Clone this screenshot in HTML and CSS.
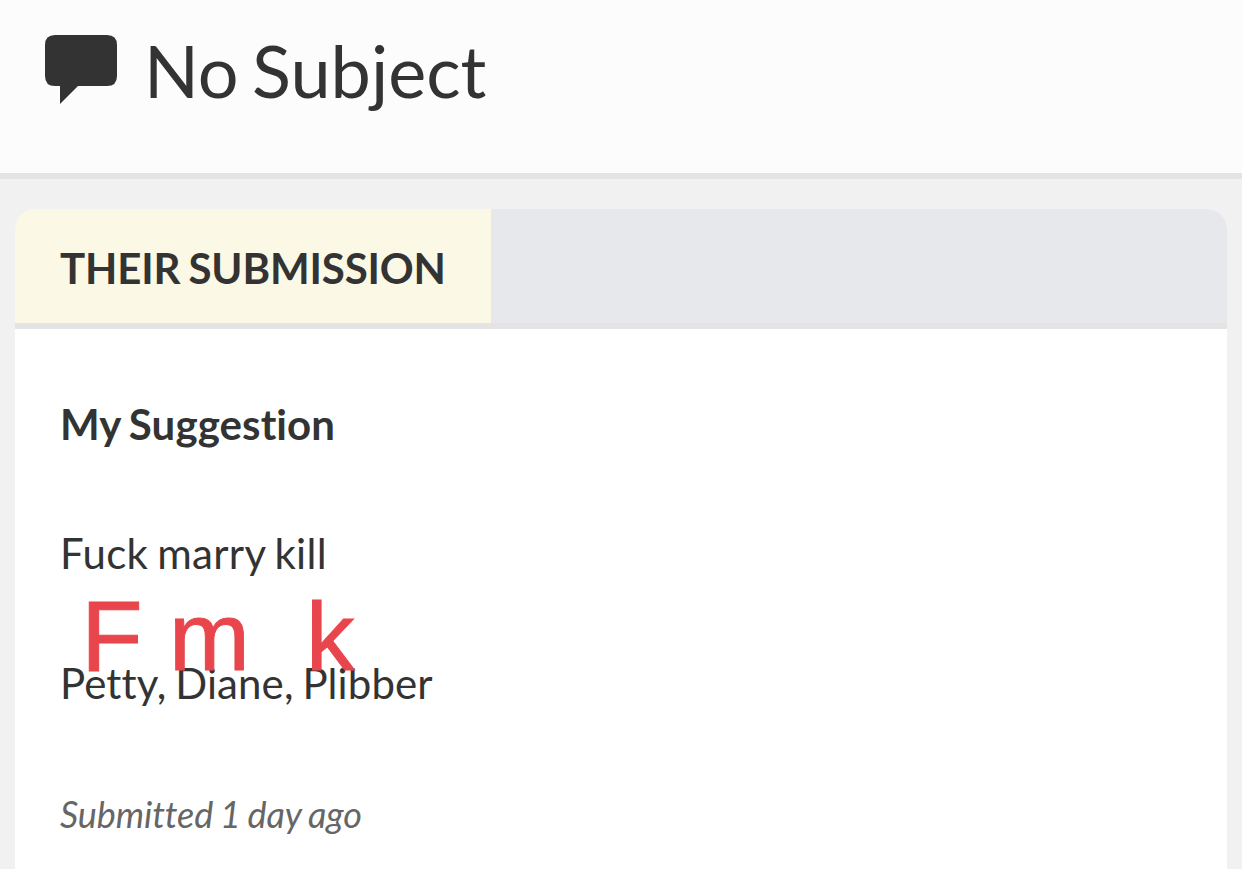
FILE: index.html
```html
<!DOCTYPE html>
<html lang="en">
<head>
    <meta charset="UTF-8">
    <meta name="viewport" content="width=device-width, initial-scale=1.0">
    <title>No Subject</title>
    <link rel="stylesheet" href="styles.css">
</head>
<body>
    <header class="page-header">
        <svg class="comment-icon" viewBox="0 0 72 69" aria-hidden="true">
            <path d="M10 0H62Q72 0 72 10V41Q72 51 62 51H33L15 69V51H10Q0 51 0 41V10Q0 0 10 0Z"/>
        </svg>
        <h1>No Subject</h1>
    </header>
    <main>
        <section class="card">
            <div class="tabs">
                <h2 class="tab active">THEIR SUBMISSION</h2>
            </div>
            <div class="submission">
                <h3>My Suggestion</h3>
                <p class="question">Fuck marry kill</p>
                <p class="names">
                    Petty, Diane, Plibber
                    <span class="mark mark-f">F</span>
                    <span class="mark mark-m">m</span>
                    <span class="mark mark-k">k</span>
                </p>
                <p class="date">Submitted 1 day ago</p>
            </div>
        </section>
    </main>
</body>
</html>
```

FILE: styles.css
```css
/* Base Styles */
:root {
    --text-color: #333;
    --border-color: #e4e4e4;
    --mark-color: #e8464c;
}

* {
    margin: 0;
    padding: 0;
    box-sizing: border-box;
}

body {
    height: 869px;
    overflow: hidden;
    background-color: #f1f1f1;
    color: var(--text-color);
    font-family: Lato, sans-serif;
    font-variant-ligatures: none;
}

/* Header */
.page-header {
    display: flex;
    align-items: flex-start;
    height: 179px;
    padding: 35px 45px 0;
    background-color: #fcfcfc;
    border-bottom: 6px solid var(--border-color);
}

.comment-icon {
    width: 72px;
    height: 69px;
    margin-right: 27px;
    fill: var(--text-color);
}

h1 {
    font-size: 72px;
    font-weight: 400;
    line-height: 70px;
    word-spacing: -5px;
    white-space: nowrap;
}

/* Card */
main {
    padding: 30px 15px 0;
}

.card {
    height: 700px;
    overflow: hidden;
    background-color: white;
    border-radius: 20px;
}

.tabs {
    display: flex;
    height: 120px;
    background-color: #e7e8ec;
    border-bottom: 6px solid #e5e4e4;
}

.tab {
    width: 476px;
    padding-left: 45px;
    font-size: 42px;
    font-weight: 700;
    letter-spacing: -0.15px;
    line-height: 118px;
    word-spacing: -2px;
    white-space: nowrap;
}

.tab.active {
    background-color: #fbf8e5;
}

/* Submission */
.submission {
    padding: 63px 45px 0;
    font-size: 42px;
    line-height: 65px;
    word-spacing: -2px;
}

.submission h3 {
    margin-bottom: 64px;
    font-size: 42px;
    font-weight: 700;
    letter-spacing: 0.1px;
}

.submission p {
    margin-bottom: 65px;
}

.submission .question {
    letter-spacing: 0.3px;
    word-spacing: -2px;
}

.names {
    position: relative;
    letter-spacing: 0.1px;
}

.submission .date {
    padding-top: 1px;
    color: #666;
    font-size: 36px;
    font-style: italic;
    letter-spacing: -0.1px;
    word-spacing: -1.5px;
}

/* Red letters written over the names */
.mark {
    position: absolute;
    top: -64px;
    color: var(--mark-color);
    font-family: "Liberation Sans", Arial, sans-serif;
    font-size: 97px;
    line-height: 100px;
    -webkit-text-stroke: 1px var(--mark-color);
}

.mark-f {
    top: -65px;
    left: 21px;
    font-size: 101px;
}

.mark-m {
    left: 109px;
}

.mark-k {
    left: 246px;
}
```
